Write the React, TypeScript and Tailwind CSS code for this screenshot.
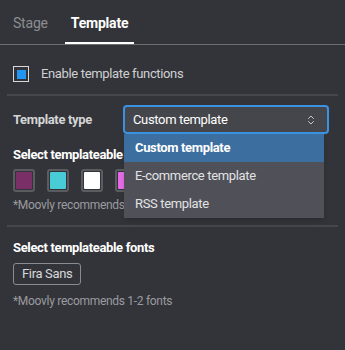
import React, { useState } from 'react';
import { ChevronsUpDown } from 'lucide-react';

const swatches = ['#7a2f67', '#48cdd6', '#ffffff', '#e56be6', '#f2c94c', '#2d9cdb'];
const templateTypes = ['Custom template', 'E-commerce template', 'RSS template'];

export default function App() {
  const [enabled, setEnabled] = useState(true);
  const [templateType, setTemplateType] = useState('Custom template');

  return (
    <div className="w-[345px] h-[350px] bg-[#333439] overflow-hidden font-['Segoe_UI','Roboto',sans-serif] text-[13px] tracking-[-0.35px]">
      {/* tabs */}
      <div className="flex px-[7px] gap-[11px] h-[44px]">
        <button className="px-[6px] h-full flex items-center text-[14px] tracking-[-0.2px] text-[#8c8d91] pt-[3px]">Stage</button>
        <button className="px-[6px] h-full flex items-center text-[14px] tracking-[-0.2px] font-bold text-white border-b-2 border-white pt-[5px]">Template</button>
      </div>
      <div className="h-px bg-[#6d6e72]" />

      {/* enable */}
      <label className="mt-[21px] flex items-center gap-[12px] px-[13px] h-[16px] cursor-pointer">
        <span
          onClick={() => setEnabled(!enabled)}
          className="w-[16px] h-[16px] border border-[#d8d8d8] flex items-center justify-center"
        >
          {enabled && <span className="w-[9px] h-[9px] bg-[#2196f3]" />}
        </span>
        <span className="text-[#cfd0d2]">Enable template functions</span>
      </label>

      <div className="mt-[12px] mx-[7px] h-[2px] bg-[#46474c]" />

      {/* template type */}
      <div className="mt-[9px] flex items-center px-[13px]">
        <span className="w-[110px] font-bold text-[#d4d5d7]">Template type</span>
        <div className="relative w-[206px]">
          <div className="h-[29px] flex items-center justify-between pl-[8px] pr-[10px] bg-[#45464b] border-2 border-[#3b92e0] rounded-[4px] text-white">
            <span>{templateType}</span>
            <ChevronsUpDown size={12} strokeWidth={2} className="text-[#c8c8c8]" />
          </div>
          <div className="absolute left-[1px] top-[29px] w-[200px] bg-[#505158] z-10 shadow-md">
            {templateTypes.map(t => (
              <div
                key={t}
                onClick={() => setTemplateType(t)}
                className={`h-[28px] flex items-center px-[11px] ${t === templateType ? 'bg-[#3c6e9f] font-bold text-white' : 'text-[#e2e2e4]'}`}
              >
                {t}
              </div>
            ))}
          </div>
        </div>
      </div>

      {/* colors */}
      <div className="mt-[12px] px-[13px]">
        <div className="font-bold text-white leading-[18px]">Select templateable colors</div>
        <div className="mt-[5px] flex gap-[12px]">
          {swatches.map(c => (
            <div key={c} className="w-[22px] h-[23px] border-2 border-[#5b5c61] rounded-[3px] p-px">
              <div className="w-full h-full rounded-[1px]" style={{ backgroundColor: c }} />
            </div>
          ))}
        </div>
        <div className="mt-[5px] text-[12px] tracking-[-0.3px] leading-[16px] text-[#9a9ba0]">*Moovly recommends 3-5 colors</div>
      </div>

      <div className="mt-[12px] mx-[7px] h-[2px] bg-[#46474c]" />

      {/* fonts */}
      <div className="mt-[12px] px-[13px]">
        <div className="font-bold text-white leading-[18px]">Select templateable fonts</div>
        <div className="mt-[6px] flex">
          <span className="h-[22px] px-[8px] flex items-center border border-[#8a8b8f] rounded-[3px] text-[#d8d9db]">Fira Sans</span>
        </div>
        <div className="mt-[8px] text-[12px] tracking-[-0.3px] leading-[16px] text-[#9a9ba0]">*Moovly recommends 1-2 fonts</div>
      </div>
    </div>
  );
}
